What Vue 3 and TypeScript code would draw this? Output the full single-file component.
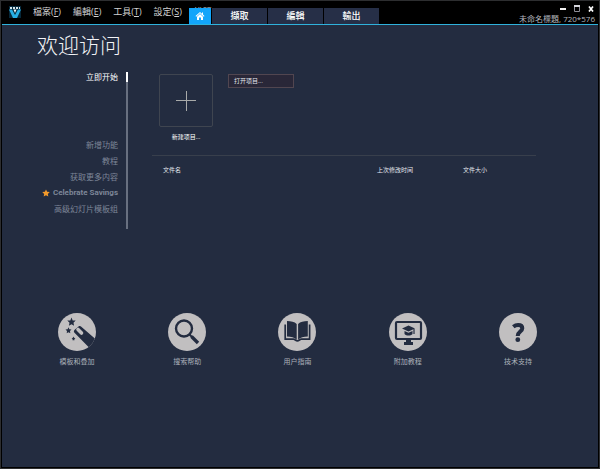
<script setup lang="ts">
import { ref } from 'vue'

interface MenuEntry {
  label: string
  key: string
}

interface HelpLink {
  label: string
  icon: 'wand' | 'search' | 'book' | 'screen' | 'question'
}

const menus: MenuEntry[] = [
  { label: '檔案', key: 'F' },
  { label: '編輯', key: 'E' },
  { label: '工具', key: 'T' },
  { label: '設定', key: 'S' },
  { label: '說明', key: 'H' },
]
const tabs: string[] = ['擷取', '編輯', '輸出']
const sections: string[] = ['新增功能', '教程', '获取更多内容', 'Celebrate Savings', '高级幻灯片模板组']
const columns: string[] = ['文件名', '上次修改时间', '文件大小']
const help: HelpLink[] = [
  { label: '模板和叠加', icon: 'wand' },
  { label: '搜索帮助', icon: 'search' },
  { label: '用户指南', icon: 'book' },
  { label: '附加教程', icon: 'screen' },
  { label: '技术支持', icon: 'question' },
]
const activeTab = ref<string>('home')
</script>

<template>
  <div class="window">
    <header class="titlebar">
      <svg class="logo" viewBox="0 0 12 12" aria-hidden="true">
        <rect width="12" height="12" fill="#06283a" />
        <path d="M1 1h2v2H1zM4 1h2v2H4zM7 1h2v2H7zM10 1h1v2h-1z" fill="#d5e4ea" />
        <path d="M0 3.500l4 8.500h4l4-8.500H9L6 9 3 3.500z" fill="#27aee4" />
        <path d="M4.500 3.500L6 7l1.500-3.500z" fill="#e8f6fb" />
      </svg>
      <nav class="menu">
        <button v-for="m in menus" :key="m.key" type="button">{{ m.label }}(<u>{{ m.key }}</u>)</button>
      </nav>
      <div class="status">
        <div class="controls">
          <button type="button" aria-label="Minimize">
            <svg viewBox="0 0 8 8"><path d="M1 5h6" stroke="#f2f2f2" stroke-width="2" /></svg>
          </button>
          <button type="button" aria-label="Maximize">
            <svg viewBox="0 0 8 8"><path d="M1.500 2.500h5v5h-5z" fill="none" stroke="#8e8e98" /><path d="M1 2h6" stroke="#d5d5dc" stroke-width="2" /></svg>
          </button>
          <button type="button" aria-label="Close">
            <svg viewBox="0 0 8 8"><path d="M2 2.500l4 5M6 2.500l-4 5" stroke="#fff" stroke-width="1.700" /></svg>
          </button>
        </div>
        <span class="project">未命名標題, 720*576</span>
      </div>
      <nav class="tabs">
        <button type="button" class="home" aria-label="Home" @click="activeTab = 'home'">
          <svg viewBox="0 0 10 10">
            <path d="M5 1L.500 5l.700.700L5 2.300l3.800 3.400.700-.700L8 3.600V1.500H7v1.300z" fill="#fff" />
            <path d="M2 5.700L5 3l3 2.700V9H6V6.500H4V9H2z" fill="#fff" />
          </svg>
        </button>
        <button v-for="t in tabs" :key="t" type="button" class="tab" @click="activeTab = t">{{ t }}</button>
      </nav>
    </header>

    <main class="page">
      <h1>欢迎访问</h1>
      <div class="body">
        <nav class="side">
          <a href="#start" class="current">立即开始</a>
          <a v-for="s in sections" :key="s" href="#more" :class="{ promo: s === 'Celebrate Savings' }">
            <svg v-if="s === 'Celebrate Savings'" viewBox="0 0 10 10" aria-hidden="true">
              <path d="M5 .500l1.400 3 3.300.400-2.400 2.300.600 3.300L5 7.900 2.100 9.500l.600-3.300L.300 3.900l3.300-.400z" fill="#f39a2b" />
            </svg>{{ s }}
          </a>
        </nav>
        <section class="start">
          <div class="actions">
            <button type="button" class="new">
              <span class="plus">
                <svg viewBox="0 0 20 20" aria-hidden="true"><path d="M10.500 0v20M0 9.500h20" stroke="#a8aaa9" /></svg>
              </span>
              <span>新建项目...</span>
            </button>
            <button type="button" class="open">打开项目...</button>
          </div>
          <table class="files">
            <thead>
              <tr><th v-for="c in columns" :key="c" scope="col">{{ c }}</th></tr>
            </thead>
          </table>
        </section>
      </div>
      <footer class="help">
        <a v-for="h in help" :key="h.icon" href="#help">
          <span class="disc">
            <svg v-if="h.icon === 'wand'" viewBox="0 0 38 38">
              <g fill="#232c40">
                <path d="M13.500 4.500l1.200 2.900 3 .200-2.200 2.100.600 3-2.600-1.500-2.600 1.500.600-3-2.200-2.100 3-.200z" />
                <path d="M10.500 14.300l.900 2 2.100.200-1.500 1.500.300 2.200-1.800-1-1.800 1 .300-2.200-1.500-1.500 2.100-.200z" />
                <path d="M15.500 23.500l.600 1.300 1.300.500-1 .800.100 1.200h-2l.100-1.200-1-.800 1.300-.500z" />
                <path d="M16.700 16.700l3.800-3.200c1-.7 2-.5 2.800.200L38 26.500 31.500 35 16.500 19.700c-.9-1-.8-2.200.2-3z" />
              </g>
              <path d="M20 16.500l3.500 3.500" stroke="#c1bfc0" stroke-width="3.600" stroke-linecap="round" />
            </svg>
            <svg v-else-if="h.icon === 'search'" viewBox="0 0 38 38">
              <circle cx="16" cy="15.500" r="8" fill="none" stroke="#232c40" stroke-width="2.400" />
              <path d="M21.500 21.500l2.500 2.500" stroke="#232c40" stroke-width="2" />
              <path d="M23.500 23.500l6.500 6.500" stroke="#232c40" stroke-width="3.400" />
            </svg>
            <svg v-else-if="h.icon === 'book'" viewBox="0 0 38 38">
              <path d="M18.700 11C16.500 8.800 13 8 9 8v15.500c4 0 7.500.800 9.700 3.200zM20.100 11C22.300 8.800 25.800 8 29.800 8v15.500c-4 0-7.500.800-9.700 3.200z" fill="#232c40" />
              <path d="M7.200 11.500V26.200h8.300c1.500 0 2.200 1.600 3.900 1.600s2.400-1.600 3.900-1.600h8.300V11.500" fill="none" stroke="#232c40" stroke-width="1.700" />
            </svg>
            <svg v-else-if="h.icon === 'screen'" viewBox="0 0 38 38">
              <rect x="7" y="9" width="25" height="17" rx="1" fill="none" stroke="#232c40" stroke-width="2.200" />
              <path d="M17 26h5v3h2v3h-9v-3h2z" fill="#232c40" />
              <path d="M19.500 12.500l6.500 3-6.500 3-6.500-3z" fill="#232c40" />
              <path d="M15.500 18l4 1.800 4-1.800v3c-2 2-6 2-8 0z" fill="#232c40" />
              <path d="M25 16v5" stroke="#232c40" stroke-width="1.200" />
            </svg>
            <svg v-else viewBox="0 0 38 38">
              <path d="M14.300 13.800c1.500-1.200 3.200-1.800 4.800-1.800 2.600 0 4.200 1.200 4.200 3.300 0 3.300-4.600 3.400-4.600 7.700" fill="none" stroke="#232c40" stroke-width="4" />
              <circle cx="18.800" cy="26.700" r="2.400" fill="#232c40" />
            </svg>
          </span>
          <span>{{ h.label }}</span>
        </a>
      </footer>
    </main>
  </div>
</template>

<style>
body {
  background: #000;
}
</style>

<style scoped>
.window {
  box-sizing: border-box;
  min-height: 100vh;
  display: flex;
  flex-direction: column;
  padding: 0 1px 1px;
  border: 1px solid #2d2e30;
  background: #000;
  color: #e4e7ee;
  font-family: "Open Sans", "Noto Sans CJK SC", sans-serif;
  font-size: 8px;
}
button {
  padding: 0;
  border: 0;
  background: none;
  color: inherit;
  font: inherit;
}
a {
  color: inherit;
  text-decoration: none;
}
svg {
  display: block;
}
.titlebar {
  position: relative;
  display: flex;
  height: 23px;
  border-bottom: 1px solid #2fb2dc;
  font-family: "Open Sans", "Noto Sans CJK TC", sans-serif;
}
.logo {
  width: 12px;
  height: 12px;
  margin: 5px 0 0 7px;
}
.menu {
  display: flex;
  gap: 12px;
  margin-left: 12px;
  height: 20px;
  font-size: 9px;
  color: #d2d2d2;
  white-space: nowrap;
}
.tabs {
  position: absolute;
  left: 187px;
  bottom: 0;
  display: flex;
  gap: 1px;
  height: 16px;
  background: #000;
}
.home {
  display: grid;
  place-items: center;
  width: 22px;
  background: #12a5fa;
}
.home svg {
  width: 10px;
  height: 10px;
}
.tab {
  width: 55px;
  background: #262f47;
  color: #fff;
  font-size: 9px;
  font-weight: 500;
  line-height: 14px;
}
.status {
  display: flex;
  flex-direction: column;
  align-items: flex-end;
  margin-left: auto;
  padding: 3px 3px 0 0;
}
.controls {
  display: flex;
  gap: 6px;
}
.controls svg {
  width: 8px;
  height: 8px;
}
.project {
  line-height: 13px;
  color: #b4b6be;
}
.page {
  flex: 1;
  background: #232c40;
}
h1 {
  margin: 0;
  padding: 6px 35px 0;
  font-size: 21px;
  font-weight: 300;
  line-height: 28px;
  color: #f2f3f6;
}
.body {
  display: flex;
  gap: 24px;
  margin-top: 13px;
  padding-right: 62px;
}
.side {
  display: flex;
  flex-direction: column;
  align-items: flex-end;
  box-sizing: border-box;
  width: 126px;
  height: 157px;
  border-right: 2px solid #687080;
  color: #7d8698;
}
.side a {
  display: flex;
  align-items: center;
  gap: 3px;
  padding-right: 8px;
  line-height: 16px;
}
.side .current {
  margin: 0 -2px 55px 0;
  padding-right: 8px;
  border-right: 2px solid #fff;
  color: #fff;
  line-height: 10px;
}
.side svg {
  width: 8px;
  height: 8px;
}
.side .promo {
  font-family: Roboto, sans-serif;
  font-weight: 700;
}
.start {
  flex: 1;
  font-size: 6px;
}
.actions {
  display: flex;
  align-items: flex-start;
  gap: 15px;
  padding: 2px 7px 11px;
}
.new {
  display: flex;
  flex-direction: column;
  align-items: center;
  gap: 4px;
  line-height: 13px;
  color: #fff;
}
.plus {
  display: grid;
  place-items: center;
  box-sizing: border-box;
  width: 54px;
  height: 53px;
  border: 1px solid #3f4550;
  border-radius: 2px;
}
.plus svg {
  width: 20px;
  height: 20px;
}
.open {
  box-sizing: border-box;
  width: 66px;
  height: 14px;
  padding-left: 5px;
  border: 1px solid #514650;
  background: #292738;
  text-align: left;
  line-height: 12px;
}
.files {
  width: 100%;
  border-top: 1px solid #383f4c;
  border-collapse: collapse;
  table-layout: fixed;
}
.files th {
  padding: 8px 0 0 11px;
  text-align: left;
  font-weight: 400;
  line-height: 13px;
}
.files th:first-child {
  width: 203px;
}
.files th:nth-child(2) {
  width: 75px;
}
.help {
  display: grid;
  grid-template-columns: repeat(5, 1fr);
  margin-top: 84px;
  padding: 0 25px 0 20px;
  color: #abb0ba;
  font-size: 7px;
}
.help a {
  display: flex;
  flex-direction: column;
  align-items: center;
  gap: 4px;
  line-height: 14px;
}
.disc {
  width: 38px;
  height: 38px;
  overflow: hidden;
  border-radius: 50%;
  background: #c1bfc0;
}
</style>
